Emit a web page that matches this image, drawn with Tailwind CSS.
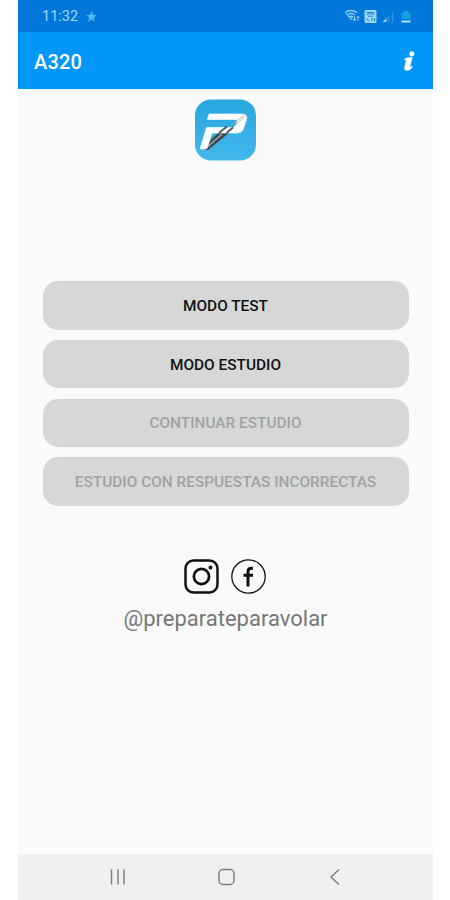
<!DOCTYPE html>
<html lang="es">
<head>
  <meta charset="UTF-8" />
  <meta name="viewport" content="width=device-width, initial-scale=1.0" />
  <title>A320</title>
  <script src="https://cdn.jsdelivr.net/npm/@tailwindcss/browser@4"></script>
</head>
<body class="bg-white font-['Roboto',sans-serif]">

  <div class="ml-[18px] w-[415px] h-[900px] bg-[#fafafa] flex flex-col overflow-hidden">

    <!-- Status bar -->
    <div class="h-8 shrink-0 bg-[#0077d9] flex items-center justify-between pl-6 pr-[21px]">
      <div class="flex items-center gap-2 pt-0.5 text-[#a5d7fb]">
        <span class="text-[14.5px] leading-none">11:32</span>
        <svg class="w-[11px] h-[11px] -mt-0.5" viewBox="0 0 12 12" fill="#4db9ee">
          <path d="M6 0l1.600 4.200 4.400.3-3.400 2.800 1.100 4.300L6 9.200l-3.700 2.400 1.100-4.300L0 4.500l4.400-.3z" />
        </svg>
      </div>
      <svg class="w-[68px] h-4" viewBox="0 0 68 16" fill="none">
        <!-- wifi -->
        <g stroke="#8fd0f8" stroke-width="1.500">
          <path d="M1 4.500Q7 .5 13 4.500M3 7Q7 4 11 7M5 9.300Q7 7.500 9 9.300" />
          <path d="M1.500 4.500l5.500 7 1.500-2" stroke-width="1" />
          <path d="M10.500 8v4.500M9 11l1.500 2 1.500-2M14 13V8.500M12.500 10l1.500-1.800 1.500 1.800" stroke-width="1" />
        </g>
        <!-- voice over wifi -->
        <rect x="20.500" y="2" width="12" height="13" rx="1.500" fill="#9bd6fa" />
        <path d="M22.500 4.500h8M22.500 6.500q4-1.500 8 0M24 8.500q2.500-1 5 0M22.500 10.500q1 2.500 3 2.500M28 10v3M30.500 13v-3" stroke="#1b80d8" />
        <!-- signal -->
        <path d="M38.500 14l4-4v4z" fill="#9bd6fa" />
        <path d="M44.500 14V7.500M48.500 14V3.500" stroke="#2796e6" stroke-width="1.500" />
        <!-- battery -->
        <path d="M57.500 11V6q0-1.500 1.500-1.500h1V3h4v1.500h1q1.500 0 1.500 1.500v5z" fill="#10a0e2" />
        <path d="M57.500 12.500h9v2h-9z" fill="#a8e4fa" />
      </svg>
    </div>

    <!-- App bar -->
    <div class="h-[57px] shrink-0 bg-[#0097f8] flex items-center justify-between pl-4 pr-[18px] text-white">
      <h1 class="text-xl font-medium leading-none pt-0.5 tracking-[0.15px]">A320</h1>
      <svg class="w-3 h-5 mt-px" viewBox="0 0 12 20" fill="white" stroke="white" stroke-width=".4">
        <circle cx="8.800" cy="2.800" r="2.400" />
        <path d="M2 7.500Q5 6.300 9.300 6.300L7 15.500Q6.700 16.800 7.400 16.200L8.500 15.100l1 .9Q7 19.600 3.700 19.500 1 19.300 1.500 16.500L3.300 9.200 1.700 9z" />
      </svg>
    </div>

    <!-- Content -->
    <main class="flex-1 flex flex-col items-center pt-[10px]">
      <svg class="w-[61px] h-[62px]" viewBox="0 0 61 62">
        <defs>
          <linearGradient id="logoBg" x1="0" y1="0" x2="0" y2="1">
            <stop offset="0" stop-color="#28a6df" />
            <stop offset="1" stop-color="#43b8ec" />
          </linearGradient>
        </defs>
        <rect y=".5" width="61" height="61" rx="16" fill="url(#logoBg)" />
        <path d="M9.500 51L12.500 44 23 34h11L13 51z" fill="#41474b" />
        <path d="M13 47.500L27 35" stroke="#8fb9cc" stroke-width="1.200" />
        <path d="M14 15H46.500Q53 15 51.500 20.500L48.500 29.500Q47 34 42 34H17L12.500 48.500Q12 50 10.500 50H5L11.500 28.500H37.500Q40 28.500 40.700 26.500L42 22.500Q42.500 20.500 40.500 20.500H12.300Z" fill="white" stroke="white" stroke-width=".6" />
        <path d="M24 34L32 27.500M31.500 34L38 28.500" stroke="#4c5a61" stroke-width="1.800" />
        <path d="M36 26L49 16.500M39 27L49.500 18" fill="none" stroke="#9aa9b0" stroke-width=".8" />
      </svg>

      <div class="mt-[120.400px] w-[366px] flex flex-col gap-[10.400px] text-[15.400px] font-medium">
        <button class="h-[48.300px] pt-0.5 rounded-[15px] bg-[#d6d8d7] text-[#111]">MODO TEST</button>
        <button class="h-[48.300px] pt-0.5 rounded-[15px] bg-[#d6d8d7] text-[#111]">MODO ESTUDIO</button>
        <button class="h-[48.300px] pt-0.5 rounded-[15px] bg-[#d6d8d7] text-[#a0a2a1]" disabled>CONTINUAR ESTUDIO</button>
        <button class="h-[48.300px] pt-0.5 rounded-[15px] bg-[#d6d8d7] text-[#a0a2a1]" disabled>ESTUDIO CON RESPUESTAS INCORRECTAS</button>
      </div>

      <div class="mt-[53px] mr-px flex gap-3">
        <svg class="w-[35px] h-[35px]" viewBox="0 0 35 35" fill="none" stroke="#111">
          <rect x="1.500" y="1.500" width="32" height="32" rx="8" stroke-width="2.500" />
          <circle cx="17.500" cy="17.500" r="7.600" stroke-width="2.800" />
          <circle cx="26.500" cy="8.500" r="2" fill="#111" stroke="none" />
        </svg>
        <svg class="w-[35px] h-[35px]" viewBox="0 0 35 35" fill="none" stroke="#111">
          <circle cx="17.500" cy="17.500" r="16.700" stroke-width="1.300" />
          <path d="M22 9.300H20.500Q17 9.300 17 12.800V27.500M12.500 16.300H22" stroke-width="3" />
        </svg>
      </div>

      <p class="mt-[9px] text-[22px] leading-8 text-[#777]">@preparateparavolar</p>
    </main>

    <!-- Navigation bar -->
    <nav class="h-[46px] shrink-0 bg-[#f0f0f0]">
      <svg class="w-[415px] h-[46px]" viewBox="0 0 415 46" fill="none" stroke="#808080" stroke-width="1.500">
        <path d="M93.500 15.500v15M100 15.500v15M106 15.500v15" />
        <rect x="201" y="15.500" width="15" height="15" rx="4" />
        <path d="M321 15.500l-8 7.500 8 7.500" />
      </svg>
    </nav>
  </div>

</body>
</html>
